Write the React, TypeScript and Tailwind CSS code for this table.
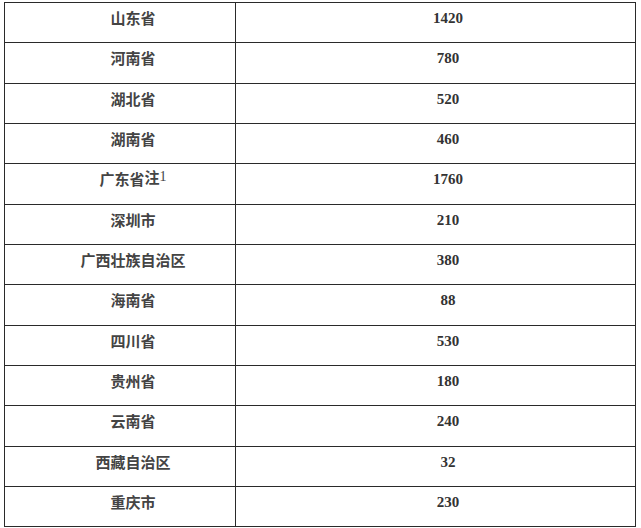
import React from 'react';

type Row = { name: string; value: string; note?: string };

const rows: Row[] = [
  { name: '山东省', value: '1420' },
  { name: '河南省', value: '780' },
  { name: '湖北省', value: '520' },
  { name: '湖南省', value: '460' },
  { name: '广东省', value: '1760', note: '注1' },
  { name: '深圳市', value: '210' },
  { name: '广西壮族自治区', value: '380' },
  { name: '海南省', value: '88' },
  { name: '四川省', value: '530' },
  { name: '贵州省', value: '180' },
  { name: '云南省', value: '240' },
  { name: '西藏自治区', value: '32' },
  { name: '重庆市', value: '230' },
];

const App: React.FC = () => {
  return (
    <div className="w-[641px] h-[528px] bg-white overflow-hidden pt-[2px] pl-[4px]">
      <div className="w-[632px] border-t border-l border-[#2a2a2a]">
        {rows.map((r) => (
          <div key={r.name} className="grid grid-cols-[231px_1fr] h-[40.35px] border-b border-[#2a2a2a]">
            <div className="border-r border-[#2a2a2a] pl-[26px] pt-[5px] text-center text-[15px] leading-[20px] font-bold text-[#444] [font-family:'Noto_Sans_CJK_SC',sans-serif]">
              {r.name}
              {r.note && (
                <span className="relative -top-[2px]">
                  注<span className="relative -top-[2px] [font-family:'Liberation_Serif',serif] font-normal text-[14px]">1</span>
                </span>
              )}
            </div>
            <div className="border-r border-[#2a2a2a] pl-[25px] pt-[5px] text-center text-[15px] leading-[20px] font-bold text-[#333] [font-family:'Liberation_Serif',serif]">
              {r.value}
            </div>
          </div>
        ))}
      </div>
    </div>
  );
};

export default App;
